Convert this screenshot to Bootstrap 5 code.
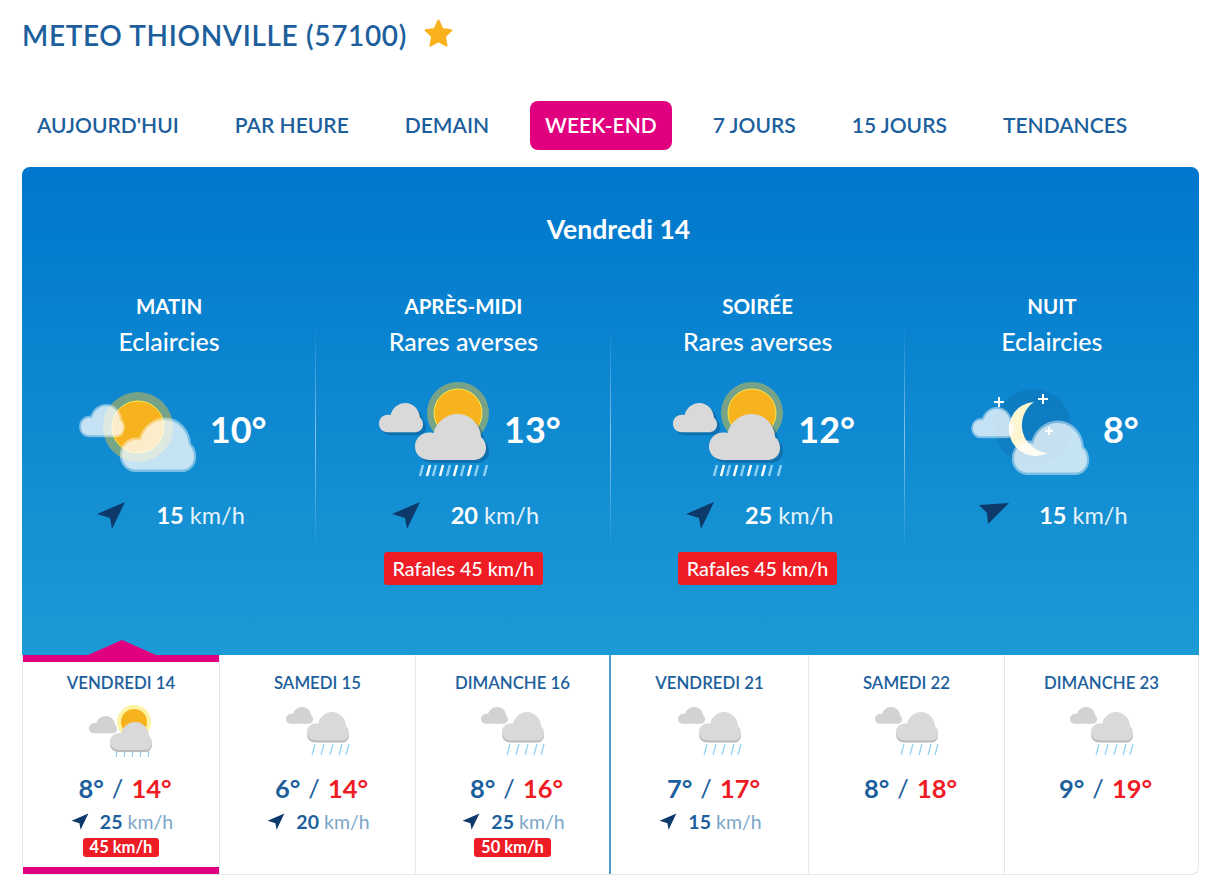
<!DOCTYPE html>
<html lang="fr">
<head>
  <meta charset="UTF-8" />
  <meta name="viewport" content="width=device-width, initial-scale=1" />
  <title>Meteo Thionville</title>
  <link href="https://cdn.jsdelivr.net/npm/bootstrap@5.3.0/dist/css/bootstrap.min.css" rel="stylesheet" />
  <style>
    body {
      font-family: "Lato", "Open Sans", sans-serif;
      background: #fff;
      color: #1d5f9c;
    }
    .page-wrap {
      width: 1177px;
      margin-left: 22px;
    }
    .page-title {
      height: 101px;
      padding-top: 18px;
      gap: 16px;
    }
    .page-title h1 {
      font-size: 28px;
      line-height: 34px;
      font-weight: 600;
      letter-spacing: .65px;
      margin: 0;
    }
    .tabs {
      gap: 26px;
      height: 66px;
      align-items: flex-start;
    }
    .tabs .nav-link {
      height: 49px;
      padding: 0 15px;
      line-height: 47px;
      font-size: 21px;
      font-weight: 600;
      color: #1d5f9c;
      border-radius: 8px;
    }
    .tabs .nav-link.active {
      background: #e0007f;
      color: #fff;
    }
    .sky-panel {
      height: 488px;
      padding-top: 45px;
      border-radius: 8px 8px 0 0;
      background: linear-gradient(#0077cc, #1c9ad6);
      color: #fff;
      position: relative;
    }
    .sky-panel h2 {
      font-size: 26.6px;
      line-height: 34px;
      font-weight: 700;
      margin: 0 0 43px 16px;
      text-align: center;
    }
    .part-col {
      position: relative;
      text-align: center;
      height: 296px;
    }
    .part-col:not(:last-child)::after {
      content: "";
      position: absolute;
      right: 0;
      top: 36px;
      height: 226px;
      width: 1px;
      background: linear-gradient(rgba(255,255,255,0), rgba(255,255,255,.5) 50%, rgba(255,255,255,0));
    }
    .part-name {
      font-size: 20.5px;
      line-height: 34px;
      font-weight: 700;
    }
    .part-sky {
      font-size: 25px;
      line-height: 36px;
      font-weight: 500;
    }
    .part-main {
      height: 100px;
      margin-top: 21px;
      padding-left: 6px;
      gap: 12px;
    }
    .part-main svg {
      width: 120px;
      height: 100px;
    }
    .part-temp {
      font-size: 36px;
      font-weight: 700;
      line-height: 1;
      margin-top: -2px;
    }
    .part-wind {
      height: 32px;
      margin-top: 20px;
      padding-left: 3px;
      gap: 30px;
      font-size: 23.5px;
      color: #e4f2fb;
    }
    .part-wind svg {
      width: 30px;
      height: 30px;
    }
    .part-wind b {
      color: #fff;
    }
    .gust-tag {
      display: inline-block;
      background: #ee1c25;
      color: #fff;
      border-radius: 3px;
      font-size: 19.7px;
      font-weight: 500;
      line-height: 33px;
      height: 33px;
      padding: 0 9px;
      margin-top: 20px;
    }
    .days-strip {
      display: grid;
      grid-template-columns: 197px 196px 195px 198px 196px 1fr;
      height: 220px;
      border: 1px solid #e3e7ee;
      border-top: 0;
      border-radius: 0 0 8px 8px;
    }
    .day-col {
      position: relative;
      height: 219px;
      text-align: center;
      padding-top: 17px;
      border-right: 1px solid #e3e7ee;
    }
    .day-col:last-child {
      border-right: 0;
    }
    .day-col.week-end {
      border-right: 2px solid #4f9cc9;
    }
    .day-col.selected::before {
      content: "";
      position: absolute;
      inset: 0;
      border-top: 7px solid #e0007f;
      border-bottom: 7px solid #e0007f;
    }
    .day-col.selected::after {
      content: "";
      position: absolute;
      left: 65px;
      top: -15px;
      width: 68px;
      height: 15px;
      background: #e0007f;
      clip-path: polygon(50% 0, 100% 100%, 0 100%);
    }
    .day-name {
      font-size: 16.8px;
      line-height: 22px;
      font-weight: 600;
    }
    .day-col > svg {
      display: block;
      width: 64px;
      height: 56px;
      margin: 9px auto 0;
    }
    .day-temp {
      font-size: 25.5px;
      line-height: 30px;
      font-weight: 700;
      margin-top: 14px;
      padding-left: 8px;
    }
    .day-temp .max {
      color: #ee1c25;
    }
    .day-temp .sep {
      font-weight: 400;
      margin: 0 1.5px;
    }
    .day-wind {
      height: 24px;
      margin-top: 7px;
      padding-left: 2px;
      gap: 11px;
      font-size: 19.5px;
      color: #7ba6c8;
    }
    .day-wind svg {
      width: 18px;
      height: 18px;
    }
    .day-wind b {
      color: #1d5f9c;
    }
    .day-gust {
      display: inline-block;
      height: 19px;
      line-height: 19px;
      margin-top: 4px;
      padding: 0 7px;
      border-radius: 3px;
      background: #ee1c25;
      color: #fff;
      font-size: 16.5px;
      font-weight: 700;
    }
  </style>
</head>
<body>
  <svg width="0" height="0" class="d-block">
    <defs>
      <path id="cl" d="M20 62C8 62 0 54 0 44C0 33 9 25 20 25C22 25 24 25 26 26C30 10 45 0 60 0C78 0 92 14 93 31C98 35 100 40 100 46C100 55 93 62 84 62Z" />
      <symbol id="i-sun-cloud" viewBox="2 -5 120 100">
        <circle cx="62" cy="42" r="35" fill="#f7c52e" opacity=".45" />
        <circle cx="62" cy="42" r="26" fill="#f7b31d" stroke="#fdea4a" />
        <use href="#cl" transform="translate(5,21) scale(.42,.47)" fill="#fff" opacity=".76" stroke="#fff" stroke-opacity=".6" stroke-width="9" />
        <use href="#cl" transform="translate(46,35) scale(.72,.8)" fill="#fff" opacity=".76" stroke="#fff" stroke-opacity=".6" stroke-width="6" />
      </symbol>
      <symbol id="i-sun-rain" viewBox="-2 0 120 100">
        <circle cx="84" cy="33" r="31" fill="#f7c52e" opacity=".45" />
        <circle cx="84" cy="33" r="24" fill="#f7b31d" stroke="#fdea4a" />
        <use href="#cl" transform="translate(8,26) scale(.44,.47)" fill="#0b3f6e" opacity=".35" />
        <use href="#cl" transform="translate(5,23) scale(.44,.47)" fill="#d9d9d9" />
        <use href="#cl" transform="translate(44,37) scale(.71,.74)" fill="#0b3f6e" opacity=".35" />
        <use href="#cl" transform="translate(41,34) scale(.71,.74)" fill="#d9d9d9" />
        <path d="M49 85l-3 11M62 85l-3 11M76 85l-3 11M90 85l-3 11M104 85l-3 11M113 85l-3 11" stroke="#8ed0f2" stroke-width="2.5" fill="none" />
        <path d="M56 85l-3 11M69 85l-3 11M83 85l-3 11M97 85l-3 11" stroke="#fff" stroke-width="2.5" fill="none" />
      </symbol>
      <symbol id="i-moon-cloud" viewBox="2 -5 120 100">
        <circle cx="64" cy="42" r="38" fill="#143c6e" opacity=".16" />
        <path d="M65 17A27 27 0 1 0 79 68A28 28 0 0 1 65 17Z" fill="#fdf6d0" />
        <path d="M29 12h2v4h4v2h-4v4h-2v-4h-4v-2h4zM73 9h2v4h4v2h-4v4h-2v-4h-4v-2h4z" fill="#fff" />
        <use href="#cl" transform="translate(4,24) scale(.4,.44)" fill="#fff" opacity=".76" stroke="#fff" stroke-opacity=".6" stroke-width="9" />
        <use href="#cl" transform="translate(45,38) scale(.73,.8)" fill="#fff" opacity=".76" stroke="#fff" stroke-opacity=".6" stroke-width="6" />
        <path d="M79 42h2v3h3v2h-3v3h-2v-3h-3v-2h3z" fill="#fff" />
      </symbol>
      <symbol id="s-sun-rain" viewBox="0 0 64 56">
        <circle cx="45" cy="19" r="17" fill="#fdf3a0" />
        <circle cx="45" cy="19" r="13" fill="#f7b31d" />
        <use href="#cl" transform="translate(0,13) scale(.28,.28)" fill="#d2d2d2" />
        <use href="#cl" transform="translate(21,21) scale(.42,.45)" fill="#b9b9b9" />
        <use href="#cl" transform="translate(21,19) scale(.42,.45)" fill="#d9d9d9" />
        <path d="M28 48l-1 6M36 48l-1 6M44 48l-1 6M52 48l-1 6M60 48l-1 6" stroke="#8ed0f2" stroke-width="1.2" fill="none" />
      </symbol>
      <symbol id="s-rain" viewBox="0 0 64 56">
        <use href="#cl" transform="translate(0,4) scale(.27,.27)" fill="#d2d2d2" />
        <use href="#cl" transform="translate(21,11) scale(.42,.46)" fill="#b9b9b9" />
        <use href="#cl" transform="translate(21,9) scale(.42,.46)" fill="#d9d9d9" />
        <path d="M29 41l-3 11M38 41l-3 11M47 41l-3 11M56 41l-3 11M63 41l-3 11" stroke="#8ed0f2" stroke-width="1.2" fill="none" />
      </symbol>
      <symbol id="a-ne" viewBox="0 0 30 30">
        <path d="M29 1L1 13L14 17L16 28Z" fill="#0d3a6b" />
      </symbol>
      <symbol id="a-nw-low" viewBox="0 0 30 30">
        <path d="M0 4L30 2L9 23L8 12Z" fill="#0d3a6b" />
      </symbol>
    </defs>
  </svg>

  <div class="page-wrap">
    <div class="page-title d-flex align-items-start">
      <h1>METEO THIONVILLE (57100)</h1>
      <svg width="31" height="31" viewBox="0 0 28 28"><path d="M14 2.5l3.5 7.6 8 1-5.9 5.6 1.6 8.1-7.2-4.1-7.2 4.1 1.6-8.1L2.5 11.1l8-1z" fill="#f9b21e" stroke="#f9b21e" stroke-width="2" stroke-linejoin="round" /></svg>
    </div>

    <ul class="nav tabs">
      <li class="nav-item"><a class="nav-link" href="#">AUJOURD'HUI</a></li>
      <li class="nav-item"><a class="nav-link" href="#">PAR HEURE</a></li>
      <li class="nav-item"><a class="nav-link" href="#">DEMAIN</a></li>
      <li class="nav-item"><a class="nav-link active" href="#">WEEK-END</a></li>
      <li class="nav-item"><a class="nav-link" href="#">7 JOURS</a></li>
      <li class="nav-item"><a class="nav-link" href="#">15 JOURS</a></li>
      <li class="nav-item"><a class="nav-link" href="#">TENDANCES</a></li>
    </ul>

    <div class="sky-panel">
      <h2>Vendredi 14</h2>
      <div class="row g-0">
        <div class="col-3 part-col">
          <div class="part-name">MATIN</div>
          <div class="part-sky">Eclaircies</div>
          <div class="part-main d-flex justify-content-center align-items-center">
            <svg><use href="#i-sun-cloud" /></svg>
            <span class="part-temp">10°</span>
          </div>
          <div class="part-wind d-flex justify-content-center align-items-center">
            <svg><use href="#a-ne" /></svg>
            <span><b>15</b> km/h</span>
          </div>
        </div>
        <div class="col-3 part-col">
          <div class="part-name">APRÈS-MIDI</div>
          <div class="part-sky">Rares averses</div>
          <div class="part-main d-flex justify-content-center align-items-center">
            <svg><use href="#i-sun-rain" /></svg>
            <span class="part-temp">13°</span>
          </div>
          <div class="part-wind d-flex justify-content-center align-items-center">
            <svg><use href="#a-ne" /></svg>
            <span><b>20</b> km/h</span>
          </div>
          <span class="gust-tag">Rafales 45 km/h</span>
        </div>
        <div class="col-3 part-col">
          <div class="part-name">SOIRÉE</div>
          <div class="part-sky">Rares averses</div>
          <div class="part-main d-flex justify-content-center align-items-center">
            <svg><use href="#i-sun-rain" /></svg>
            <span class="part-temp">12°</span>
          </div>
          <div class="part-wind d-flex justify-content-center align-items-center">
            <svg><use href="#a-ne" /></svg>
            <span><b>25</b> km/h</span>
          </div>
          <span class="gust-tag">Rafales 45 km/h</span>
        </div>
        <div class="col-3 part-col">
          <div class="part-name">NUIT</div>
          <div class="part-sky">Eclaircies</div>
          <div class="part-main d-flex justify-content-center align-items-center">
            <svg><use href="#i-moon-cloud" /></svg>
            <span class="part-temp">8°</span>
          </div>
          <div class="part-wind d-flex justify-content-center align-items-center">
            <svg><use href="#a-nw-low" /></svg>
            <span><b>15</b> km/h</span>
          </div>
        </div>
      </div>
    </div>

    <div class="days-strip">
      <div class="day-col selected">
        <div class="day-name">VENDREDI 14</div>
        <svg><use href="#s-sun-rain" /></svg>
        <div class="day-temp">8°<span class="sep"> / </span><span class="max">14°</span></div>
        <div class="day-wind d-flex justify-content-center align-items-center"><svg><use href="#a-ne" /></svg><span><b>25</b> km/h</span></div>
        <span class="day-gust">45 km/h</span>
      </div>
      <div class="day-col">
        <div class="day-name">SAMEDI 15</div>
        <svg><use href="#s-rain" /></svg>
        <div class="day-temp">6°<span class="sep"> / </span><span class="max">14°</span></div>
        <div class="day-wind d-flex justify-content-center align-items-center"><svg><use href="#a-ne" /></svg><span><b>20</b> km/h</span></div>
      </div>
      <div class="day-col week-end">
        <div class="day-name">DIMANCHE 16</div>
        <svg><use href="#s-rain" /></svg>
        <div class="day-temp">8°<span class="sep"> / </span><span class="max">16°</span></div>
        <div class="day-wind d-flex justify-content-center align-items-center"><svg><use href="#a-ne" /></svg><span><b>25</b> km/h</span></div>
        <span class="day-gust">50 km/h</span>
      </div>
      <div class="day-col">
        <div class="day-name">VENDREDI 21</div>
        <svg><use href="#s-rain" /></svg>
        <div class="day-temp">7°<span class="sep"> / </span><span class="max">17°</span></div>
        <div class="day-wind d-flex justify-content-center align-items-center"><svg><use href="#a-ne" /></svg><span><b>15</b> km/h</span></div>
      </div>
      <div class="day-col">
        <div class="day-name">SAMEDI 22</div>
        <svg><use href="#s-rain" /></svg>
        <div class="day-temp">8°<span class="sep"> / </span><span class="max">18°</span></div>
      </div>
      <div class="day-col">
        <div class="day-name">DIMANCHE 23</div>
        <svg><use href="#s-rain" /></svg>
        <div class="day-temp">9°<span class="sep"> / </span><span class="max">19°</span></div>
      </div>
    </div>
  </div>

  <script src="https://cdn.jsdelivr.net/npm/bootstrap@5.3.0/dist/js/bootstrap.bundle.min.js"></script>
</body>
</html>
